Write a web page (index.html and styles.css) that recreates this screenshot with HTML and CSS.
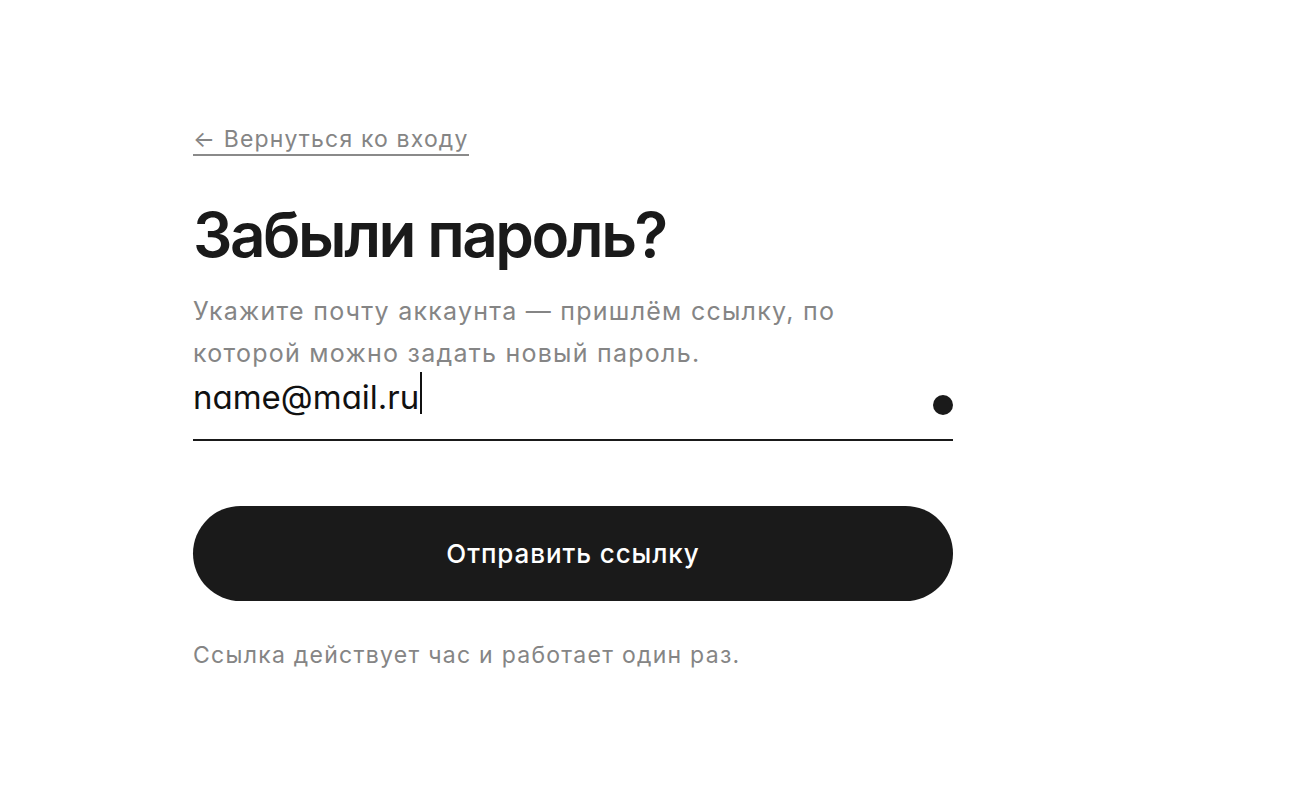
FILE: index.html
```html
<!DOCTYPE html>
<html lang="ru">
<head>
<meta charset="utf-8">
<title>Забыли пароль?</title>
<link rel="stylesheet" href="styles.css">
</head>
<body>
<main class="page">
  <div class="form">
    <a class="back" href="#">← Вернуться ко входу</a>
    <h1 class="title">Забыли пароль?</h1>
    <p class="lead">Укажите почту аккаунта — пришлём ссылку, по которой можно задать новый пароль.</p>
    <div class="field">
      <span class="value">name@mail.ru</span><span class="caret"></span>
      <span class="dot"></span>
    </div>
    <button class="submit" type="button">Отправить ссылку</button>
    <p class="note">Ссылка действует час и работает один раз.</p>
  </div>
</main>
</body>
</html>
```

FILE: styles.css
```css
html, body {
  margin: 0;
  padding: 0;
  background: #ffffff;
}
body {
  font-family: "Inter", "Liberation Sans", sans-serif;
  color: #1a1a1a;
}
.page {
  padding: 125px 0 0 193px;
}
.form {
  width: 760px;
  display: flex;
  flex-direction: column;
  align-items: flex-start;
}
.back {
  font-size: 23px;
  line-height: 28px;
  letter-spacing: 0.05em;
  color: #858585;
  text-decoration: none;
  border-bottom: 2px solid #8a8a8a;
  padding-bottom: 1px;
}
.title {
  margin: 43px 0 0;
  font-size: 62px;
  font-weight: 600;
  letter-spacing: -0.04em;
  line-height: 72px;
  color: #1a1a1a;
}
.lead {
  margin: 19px 0 0;
  width: 680px;
  font-size: 25px;
  letter-spacing: 0.05em;
  line-height: 42px;
  color: #858585;
}
.field {
  width: 100%;
  display: flex;
  align-items: flex-start;
  height: 65px;
  border-bottom: 2px solid #1a1a1a;
}
.value {
  margin-top: 2px;
  font-size: 33px;
  line-height: 42px;
  color: #111;
  font-feature-settings: "cv11" 1;
}
.caret {
  width: 2px;
  height: 42px;
  background: #111;
  margin-left: 1px;
  margin-top: -2px;
}
.dot {
  margin-left: auto;
  margin-top: 21px;
  width: 20px;
  height: 20px;
  border-radius: 50%;
  background: #1a1a1a;
}
.submit {
  margin-top: 65px;
  width: 100%;
  height: 95px;
  border: none;
  border-radius: 48px;
  background: #1a1a1a;
  color: #ffffff;
  font-family: "Inter", "Liberation Sans", sans-serif;
  font-size: 26px;
  font-weight: 500;
  letter-spacing: 0.035em;
  cursor: pointer;
}
.note {
  margin: 39px 0 0;
  font-size: 23px;
  line-height: 30px;
  letter-spacing: 0.055em;
  color: #858585;
}
```
